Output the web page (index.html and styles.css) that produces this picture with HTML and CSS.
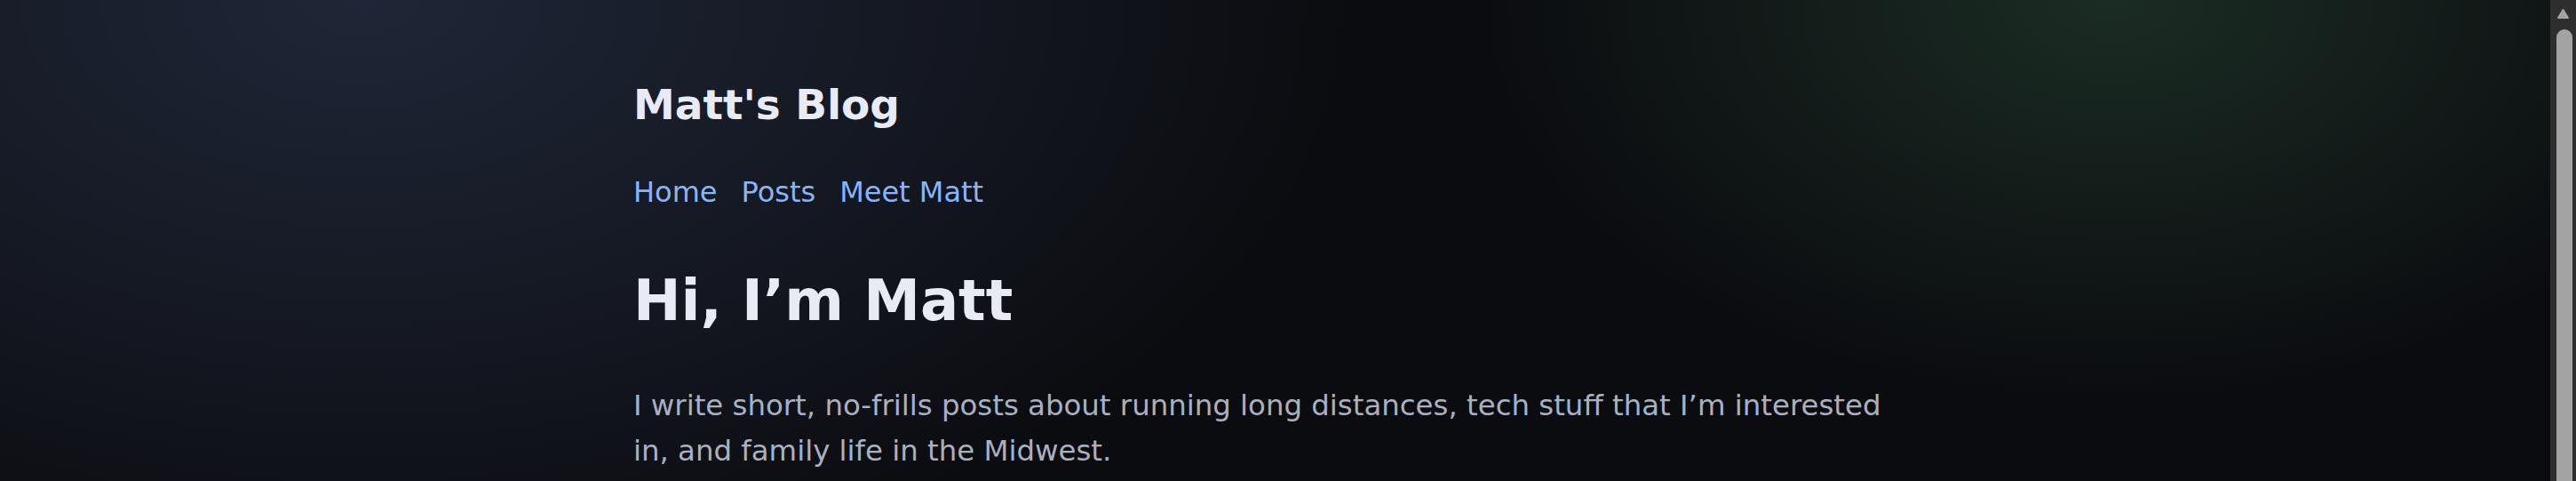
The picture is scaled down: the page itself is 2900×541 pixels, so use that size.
FILE: index.html
```html
<!DOCTYPE html>
<html lang="en">
<head>
<meta charset="utf-8">
<title>Matt's Blog</title>
<link rel="stylesheet" href="styles.css">
</head>
<body>
<div class="page">
  <header class="site-header">
    <div class="site-title">Matt's Blog</div>
    <nav class="site-nav">
      <a href="#">Home</a>
      <a href="#">Posts</a>
      <a href="#">Meet Matt</a>
    </nav>
  </header>
  <main class="intro">
    <h1 class="intro-title">Hi, I’m Matt</h1>
    <p class="intro-text">I write short, no-frills posts about running long distances, tech stuff that I’m interested in, and family life in the Midwest.</p>
  </main>
</div>
<div class="scrollbar" aria-hidden="true">
  <svg class="scrollbar-arrow" width="29" height="30" viewBox="0 0 29 30"><path d="M14.5 11 L20 20 L9 20 Z" fill="#a3a3a3" stroke="#a3a3a3" stroke-width="2" stroke-linejoin="round"/></svg>
  <div class="scrollbar-thumb"></div>
</div>
</body>
</html>
```

FILE: styles.css
```css
html {
  background: #0b0c10;
}

body {
  margin: 0;
  padding-right: 29px;
  min-height: 580px;
  font-family: "DejaVu Sans", Verdana, sans-serif;
  color: #e8ebf3;
  background:
    radial-gradient(950px 600px at 82% 0%, rgba(30, 50, 39, 0.85), rgba(30, 50, 39, 0) 75%),
    radial-gradient(1500px 900px at 14% 0%, #1f2637 0%, rgba(24, 29, 41, 0.65) 45%, rgba(11, 12, 16, 0) 75%),
    #0b0c10;
}

.page {
  max-width: 1445px;
  margin: 0 auto;
  padding-top: 90px;
}

.site-title {
  font-size: 47px;
  line-height: 56px;
  font-weight: 700;
  color: #e8ebf3;
  margin-bottom: 45px;
}

.site-nav {
  display: flex;
  gap: 27px;
  font-size: 32px;
  line-height: 51.2px;
  margin-bottom: 58px;
}

.site-nav a {
  color: #8ab4f8;
  text-decoration: none;
}

.intro-title {
  font-size: 64px;
  line-height: 76.8px;
  font-weight: 700;
  margin: 0 0 54px;
  color: #e8ebf3;
}

.intro-text {
  font-size: 32.4px;
  line-height: 51.2px;
  margin: 0;
  color: #a9b0c0;
}

.scrollbar {
  position: fixed;
  top: 0;
  right: 0;
  bottom: 0;
  width: 29px;
  background: #2e2e2e;
  display: flex;
  flex-direction: column;
  align-items: center;
}

.scrollbar-arrow {
  display: block;
  flex: none;
}

.scrollbar-thumb {
  flex: 1;
  width: 18px;
  margin-top: 3px;
  margin-left: 2px;
  background: #a3a3a3;
  border-radius: 9px 9px 0 0;
}
```
